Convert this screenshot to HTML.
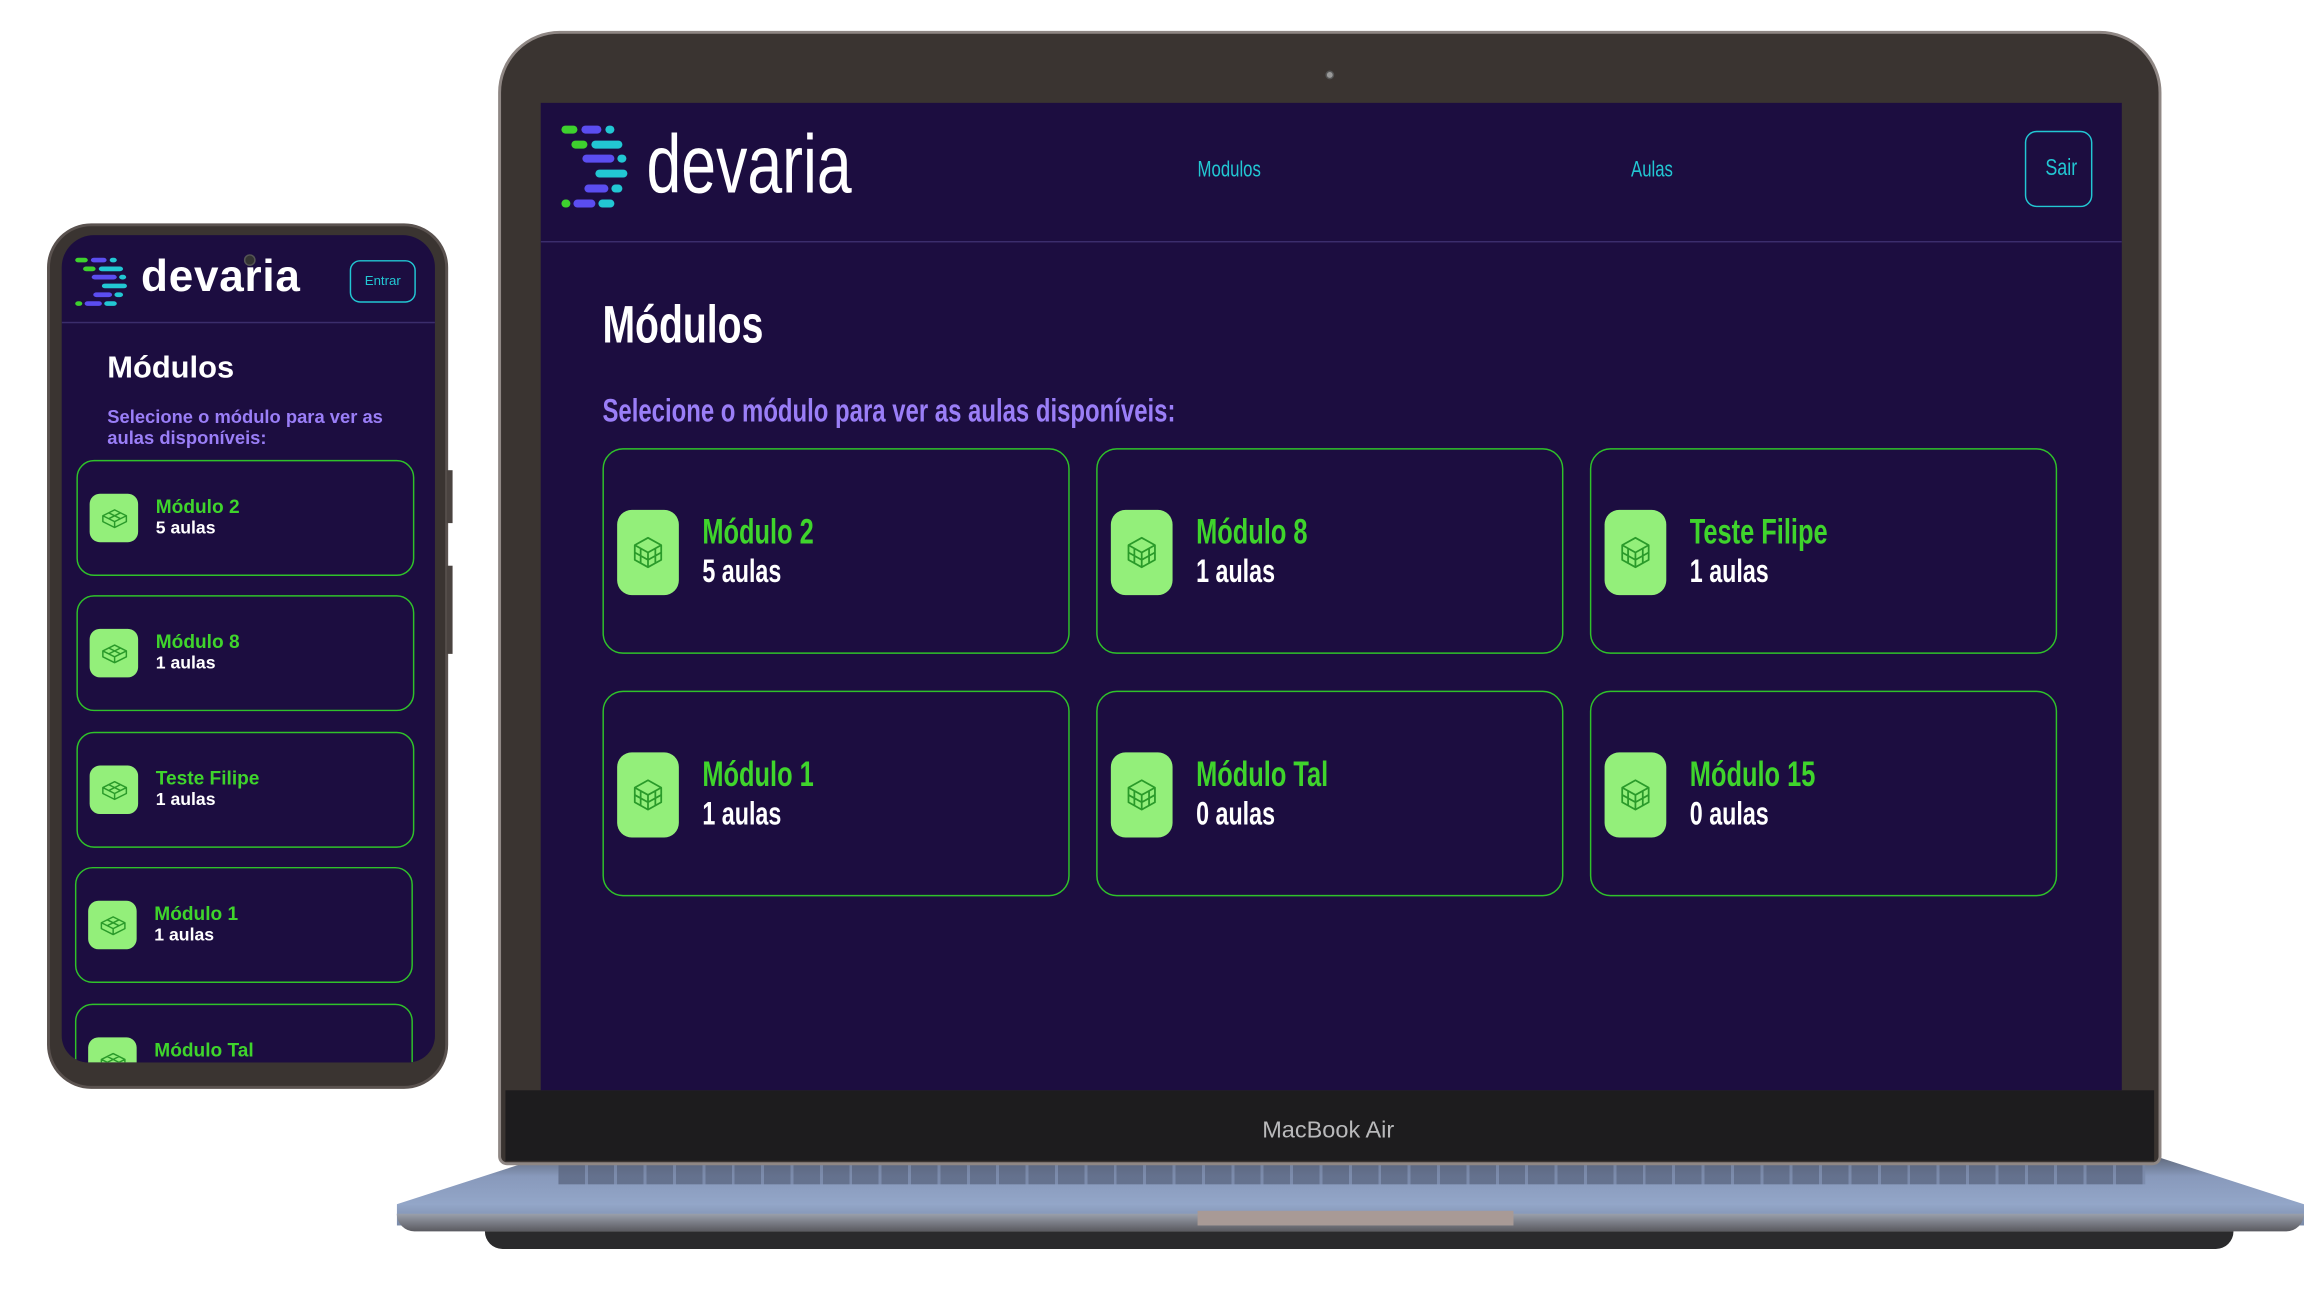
<!DOCTYPE html>
<html><head><meta charset="utf-8"><style>
*{margin:0;padding:0;box-sizing:border-box}
html,body{width:2304px;height:1296px;background:#fff;overflow:hidden}
#w{position:absolute;left:0;top:0;width:1568px;height:882px;transform:scale(1.46939);transform-origin:0 0;font-family:"Liberation Sans",sans-serif}
.a{position:absolute}
.card{position:absolute;width:318px;height:140px;border:1.5px solid #2fc22a;border-radius:14px;background:#1c0d40}
.ib{position:absolute;left:9px;top:41px;width:42px;height:58px;background:#93ef7a;border-radius:10px}
.ib svg{position:absolute;left:10px;top:18px}
.ct{position:absolute;left:67px;top:44px;color:#3fd42c;font-size:24px;font-weight:bold;line-height:26px;white-space:nowrap;transform:scaleX(.72);transform-origin:0 0}
.cs{position:absolute;left:67px;top:70px;color:#fff;font-size:22px;font-weight:bold;line-height:26px;white-space:nowrap;transform:scaleX(.72);transform-origin:0 0}
.pc{position:absolute;left:52px;width:230px;height:79px;border:1px solid #2fc22a;border-radius:12px;background:#1c0d40}
.pib{position:absolute;left:8px;top:22px;width:33px;height:33px;background:#93ef7a;border-radius:7px}
.pib svg{position:absolute;left:8px;top:9px}
.pt{position:absolute;left:53px;top:24px;color:#3fd42c;font-size:13px;font-weight:bold;line-height:14px;white-space:nowrap}
.ps{position:absolute;left:53px;top:38px;color:#fff;font-size:12px;font-weight:bold;line-height:14px;white-space:nowrap}
</style></head><body><div id="w">
<svg width="0" height="0" style="position:absolute"><defs>
<g id="cube" fill="none" stroke="#2a9a2a" stroke-width="1.2" stroke-linejoin="round">
<path d="M11 1 L20 6 L20 16 L11 21 L2 16 L2 6 Z"/><path d="M2 6 L11 11 L20 6 M11 11 L11 21 M6 8.5 L6 18 M16 8.5 L16 18 M2 11 L11 16 L20 11"/></g>
<g id="pcube" fill="none" stroke="#2a9a2a" stroke-width="1" stroke-linejoin="round">
<path d="M1 6 L9 2 L17 6 L17 10 L9 14 L1 10 Z M1 6 L9 10 L17 6 M9 10 L9 14 M5 4 L13 8 M13 4 L5 8"/></g>
</defs></svg>

<!-- laptop base -->
<div class="a" style="left:270px;top:786px;width:1298px;height:48px;background:linear-gradient(#5c6576,#8899bb 30%,#93a6c8 70%,#7a8aa8);clip-path:polygon(8% 0,92% 0,100% 70%,100% 100%,0 100%,0 70%)"></div>
<div class="a" style="left:380px;top:792px;width:1080px;height:14px;background:repeating-linear-gradient(90deg,#55607a 0 18px,#7786a6 18px 20px);opacity:.7"></div>
<div class="a" style="left:270px;top:826px;width:1298px;height:12px;background:linear-gradient(#9aa0ac,#5a5a60);border-radius:0 0 20px 20px"></div>
<div class="a" style="left:815px;top:824px;width:215px;height:10px;background:#a89a96"></div>
<div class="a" style="left:330px;top:838px;width:1190px;height:12px;background:#2a2a2c;border-radius:0 0 40px 40px"></div>

<!-- laptop lid -->
<div class="a" style="left:339px;top:21px;width:1132px;height:772px;background:#3a3431;border:2px solid #8f8784;border-radius:42px 42px 6px 6px"></div>
<div class="a" style="left:902px;top:48px;width:6px;height:6px;border-radius:50%;background:#999;border:1px solid #555"></div>
<div class="a" style="left:344px;top:742px;width:1122px;height:48px;background:#1d1c1e"></div>
<div class="a" style="left:859px;top:761px;color:#b9b9bb;font-size:16px">MacBook Air</div>

<!-- laptop screen -->
<div class="a" style="left:368px;top:70px;width:1076px;height:672px;background:#1c0d40;overflow:hidden">
 <div class="a" style="left:0;top:94px;width:1076px;height:1px;background:#3b2d6c"></div>
 <svg class="a" style="left:10px;top:8px" width="51" height="68" viewBox="0 0 75 100">
  <g stroke-linecap="round" stroke-width="8">
   <line x1="10" y1="15" x2="18" y2="15" stroke="#3ed12e"/><line x1="30" y1="15" x2="42" y2="15" stroke="#5b4df0"/><line x1="54" y1="15" x2="55" y2="15" stroke="#22c7d3"/>
   <line x1="20" y1="30" x2="28" y2="30" stroke="#3ed12e"/><line x1="40" y1="30" x2="63" y2="30" stroke="#22c7d3"/>
   <line x1="31" y1="44" x2="55" y2="44" stroke="#5b4df0"/><line x1="66" y1="44" x2="67" y2="44" stroke="#22c7d3"/>
   <line x1="44" y1="59" x2="68" y2="59" stroke="#22c7d3"/>
   <line x1="33" y1="74" x2="49" y2="74" stroke="#5b4df0"/><line x1="60" y1="74" x2="63" y2="74" stroke="#22c7d3"/>
   <line x1="10" y1="89" x2="11" y2="89" stroke="#3ed12e"/><line x1="22" y1="89" x2="36" y2="89" stroke="#5b4df0"/><line x1="47" y1="89" x2="55" y2="89" stroke="#22c7d3"/>
  </g></svg>
 <div class="a" style="left:72px;top:10px;color:#fff;font-size:56px;line-height:64px;transform:scaleX(.76);transform-origin:0 0">devaria</div>
 <div class="a" style="left:447px;top:37px;color:#22c7d3;font-size:15px;transform:scaleX(.76);transform-origin:0 0">Modulos</div>
 <div class="a" style="left:742px;top:37px;color:#22c7d3;font-size:15px;transform:scaleX(.76);transform-origin:0 0">Aulas</div>
 <div class="a" style="left:1010px;top:19px;width:46px;height:52px;border:1px solid #22c7d3;border-radius:8px"></div>
 <div class="a" style="left:1024px;top:36px;color:#22c7d3;font-size:16px;transform:scaleX(.76);transform-origin:0 0">Sair</div>
 <div class="a" style="left:42px;top:130px;color:#fff;font-size:36px;font-weight:bold;transform:scaleX(.74);transform-origin:0 0">Módulos</div>
 <div class="a" style="left:42px;top:197px;color:#9a7ef7;font-size:22px;font-weight:bold;white-space:nowrap;transform:scaleX(.74);transform-origin:0 0">Selecione o módulo para ver as aulas disponíveis:</div>
</div>

<!-- laptop cards -->
<div class="card" style="left:410px;top:305px"><div class="ib"><svg width="22" height="22"><use href="#cube"/></svg></div><div class="ct">Módulo 2</div><div class="cs">5 aulas</div></div>
<div class="card" style="left:746px;top:305px"><div class="ib"><svg width="22" height="22"><use href="#cube"/></svg></div><div class="ct">Módulo 8</div><div class="cs">1 aulas</div></div>
<div class="card" style="left:1082px;top:305px"><div class="ib"><svg width="22" height="22"><use href="#cube"/></svg></div><div class="ct">Teste Filipe</div><div class="cs">1 aulas</div></div>
<div class="card" style="left:410px;top:470px"><div class="ib"><svg width="22" height="22"><use href="#cube"/></svg></div><div class="ct">Módulo 1</div><div class="cs">1 aulas</div></div>
<div class="card" style="left:746px;top:470px"><div class="ib"><svg width="22" height="22"><use href="#cube"/></svg></div><div class="ct">Módulo Tal</div><div class="cs">0 aulas</div></div>
<div class="card" style="left:1082px;top:470px"><div class="ib"><svg width="22" height="22"><use href="#cube"/></svg></div><div class="ct">Módulo 15</div><div class="cs">0 aulas</div></div>

<!-- phone -->
<div class="a" style="left:32px;top:152px;width:273px;height:589px;background:#3a3431;border:2px solid #5a524f;border-radius:30px"></div>
<div class="a" style="left:304px;top:320px;width:4px;height:36px;background:#4a4340"></div>
<div class="a" style="left:304px;top:385px;width:4px;height:60px;background:#4a4340"></div>
<div class="a" style="left:42px;top:160px;width:254px;height:563px;background:#1c0d40;border-radius:22px 22px 18px 18px;overflow:hidden">
 <div class="a" style="left:0;top:59px;width:254px;height:1px;background:#3b2d6c"></div>
 <svg class="a" style="left:6px;top:11px" width="40" height="40" viewBox="0 0 75 100" preserveAspectRatio="none">
  <g stroke-linecap="round" stroke-width="8">
   <line x1="10" y1="15" x2="18" y2="15" stroke="#3ed12e"/><line x1="30" y1="15" x2="42" y2="15" stroke="#5b4df0"/><line x1="54" y1="15" x2="55" y2="15" stroke="#22c7d3"/>
   <line x1="20" y1="30" x2="28" y2="30" stroke="#3ed12e"/><line x1="40" y1="30" x2="63" y2="30" stroke="#22c7d3"/>
   <line x1="31" y1="44" x2="55" y2="44" stroke="#5b4df0"/><line x1="66" y1="44" x2="67" y2="44" stroke="#22c7d3"/>
   <line x1="44" y1="59" x2="68" y2="59" stroke="#22c7d3"/>
   <line x1="33" y1="74" x2="49" y2="74" stroke="#5b4df0"/><line x1="60" y1="74" x2="63" y2="74" stroke="#22c7d3"/>
   <line x1="10" y1="89" x2="11" y2="89" stroke="#3ed12e"/><line x1="22" y1="89" x2="36" y2="89" stroke="#5b4df0"/><line x1="47" y1="89" x2="55" y2="89" stroke="#22c7d3"/>
  </g></svg>
 <div class="a" style="left:54px;top:11px;color:#fff;font-size:30px;font-weight:bold;line-height:36px;letter-spacing:.5px">devaria</div>
 <div class="a" style="left:124px;top:13px;width:8px;height:8px;border-radius:50%;background:#333;border:1px solid #555"></div>
 <div class="a" style="left:196px;top:17px;width:45px;height:29px;border:1px solid #22c7d3;border-radius:7px;color:#22c7d3;font-size:9px;line-height:27px;text-align:center">Entrar</div>
 <div class="a" style="left:31px;top:79px;color:#fff;font-size:21px;font-weight:bold">Módulos</div>
 <div class="a" style="left:31px;top:117px;color:#9a7ef7;font-size:12.5px;font-weight:bold;line-height:14px;width:200px">Selecione o módulo para ver as aulas disponíveis:</div>
</div>
<div class="a" style="left:42px;top:160px;width:254px;height:563px;overflow:hidden;border-radius:22px 22px 18px 18px">
 <div class="pc" style="left:10px;top:153px"><div class="pib"><svg width="18" height="16"><use href="#pcube"/></svg></div><div class="pt">Módulo 2</div><div class="ps">5 aulas</div></div>
 <div class="pc" style="left:10px;top:245px"><div class="pib"><svg width="18" height="16"><use href="#pcube"/></svg></div><div class="pt">Módulo 8</div><div class="ps">1 aulas</div></div>
 <div class="pc" style="left:10px;top:338px"><div class="pib"><svg width="18" height="16"><use href="#pcube"/></svg></div><div class="pt">Teste Filipe</div><div class="ps">1 aulas</div></div>
 <div class="pc" style="left:9px;top:430px"><div class="pib"><svg width="18" height="16"><use href="#pcube"/></svg></div><div class="pt">Módulo 1</div><div class="ps">1 aulas</div></div>
 <div class="pc" style="left:9px;top:523px"><div class="pib"><svg width="18" height="16"><use href="#pcube"/></svg></div><div class="pt">Módulo Tal</div><div class="ps">0 aulas</div></div>
</div>

</div></body></html>
